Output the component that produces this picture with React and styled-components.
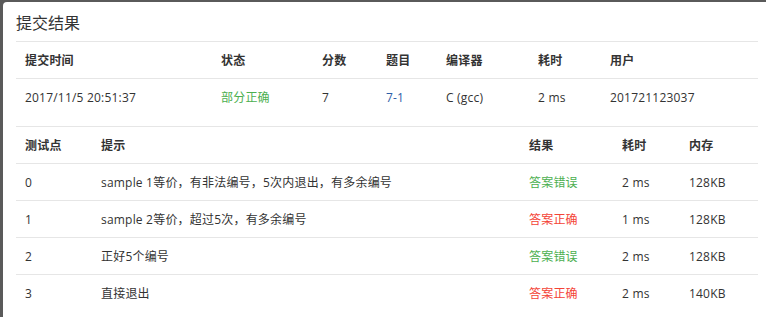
import React from 'react';
import styled, { createGlobalStyle, css } from 'styled-components';

const GlobalStyle = createGlobalStyle`
  html, body {
    margin: 0;
    padding: 0;
    background: #5a5a5a;
    overflow: hidden;
  }
  body {
    font-family: "Open Sans", "Noto Sans CJK SC", sans-serif;
    color: #333;
  }
`;

const summaryCols = '196px 101px 64px 60px 92px 72px 1fr';
const caseCols = '76px 428px 93px 67px 1fr';

const summary = {
  head: ['提交时间', '状态', '分数', '题目', '编译器', '耗时', '用户'],
  row: [
    { text: '2017/11/5 20:51:37' },
    { text: '部分正确', tone: 'green' },
    { text: '7' },
    { text: '7-1', tone: 'link' },
    { text: 'C (gcc)' },
    { text: '2 ms' },
    { text: '201721123037' },
  ],
};

const cases = [
  ['0', 'sample 1等价，有非法编号，5次内退出，有多余编号', '答案错误', 'green', '2 ms', '128KB'],
  ['1', 'sample 2等价，超过5次，有多余编号', '答案正确', 'red', '1 ms', '128KB'],
  ['2', '正好5个编号', '答案错误', 'green', '2 ms', '128KB'],
  ['3', '直接退出', '答案正确', 'red', '2 ms', '140KB'],
];

const App = () => (
  <>
    <GlobalStyle />
    <Modal>
      <Title>提交结果</Title>
      <Table cols={summaryCols}>
        {summary.head.map((h) => (
          <HeadCell key={h}>{h}</HeadCell>
        ))}
        {summary.row.map((c, i) => (
          <Cell key={i} tone={c.tone} last>
            {c.text}
          </Cell>
        ))}
      </Table>
      <Table cols={caseCols} bordered>
        {['测试点', '提示', '结果', '耗时', '内存'].map((h) => (
          <HeadCell key={h}>{h}</HeadCell>
        ))}
        {cases.map(([id, hint, result, tone, time, mem], r) => {
          const last = r === cases.length - 1;
          return (
            <React.Fragment key={id}>
              <Cell last={last}>{id}</Cell>
              <Cell last={last}>{hint}</Cell>
              <Cell last={last} tone={tone}>
                {result}
              </Cell>
              <Cell last={last}>{time}</Cell>
              <Cell last={last}>{mem}</Cell>
            </React.Fragment>
          );
        })}
      </Table>
    </Modal>
  </>
);

export default App;

const tones = {
  green: '#4caf50',
  red: '#f44336',
  link: '#2d5ea8',
};

const Modal = styled.div`
  margin: 2px 0 0 3px;
  width: 768px;
  height: calc(100vh - 2px);
  padding: 0 13px;
  box-sizing: border-box;
  background: #fff;
  border-radius: 4px 4px 0 0;
`;

const Title = styled.div`
  height: 39px;
  display: flex;
  align-items: center;
  font-size: 16px;
  color: #333;
  border-bottom: 1px solid #e6e6e6;
`;

const Table = styled.div`
  display: grid;
  grid-template-columns: ${({ cols }) => cols};
  font-size: 12px;
  letter-spacing: 0.2px;
  ${({ bordered }) =>
    bordered &&
    css`
      margin-top: 10px;
      border-top: 1px solid #e6e6e6;
    `}
`;

const HeadCell = styled.div`
  height: 36px;
  display: flex;
  align-items: center;
  padding-left: 9px;
  font-weight: 700;
  color: #333;
  border-bottom: 1px solid #e6e6e6;
  white-space: nowrap;
`;

const Cell = styled.div`
  height: 36px;
  display: flex;
  align-items: center;
  padding-left: 9px;
  color: ${({ tone }) => tones[tone] || '#333'};
  border-bottom: 1px solid #e6e6e6;
  white-space: nowrap;
  ${({ last }) =>
    last &&
    css`
      border-bottom-color: transparent;
    `}
`;
